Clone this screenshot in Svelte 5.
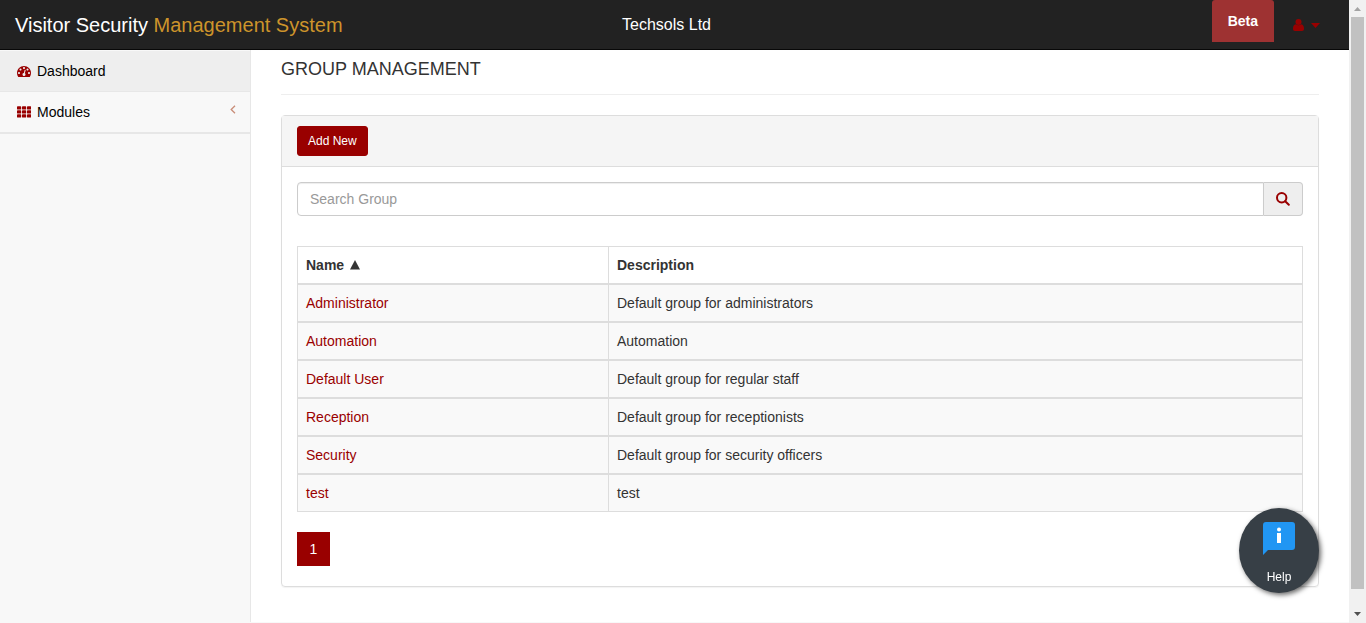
<script>
  const groups = [
    { name: 'Administrator', description: 'Default group for administrators' },
    { name: 'Automation', description: 'Automation' },
    { name: 'Default User', description: 'Default group for regular staff' },
    { name: 'Reception', description: 'Default group for receptionists' },
    { name: 'Security', description: 'Default group for security officers' },
    { name: 'test', description: 'test' }
  ];

  let query = $state('');
  let ascending = $state(true);

  const visible = $derived(
    groups
      .filter((g) => g.name.toLowerCase().includes(query.trim().toLowerCase()))
      .sort((a, b) => a.name.localeCompare(b.name) * (ascending ? 1 : -1))
  );
</script>

<div class="shell">
  <div class="page">
    <header class="navbar">
      <a class="brand" href="#home">Visitor Security <span>Management System</span></a>
      <div class="company">Techsols Ltd</div>
      <div class="tools">
        <span class="beta">Beta</span>
        <button class="user" type="button" aria-label="User menu">
          <svg width="11" height="12" viewBox="0 0 11 12" aria-hidden="true">
            <circle cx="5.500" cy="3" r="3" />
            <path d="M2.800 5.200C.8 5.300 0 7.300 0 9.800C0 11.200 .8 12 2 12H9C10.200 12 11 11.200 11 9.800C11 7.300 10.200 5.300 8.200 5.200C6.800 6.600 4.200 6.600 2.800 5.200Z" />
          </svg>
          <svg width="9" height="5" viewBox="0 0 9 5" aria-hidden="true"><path d="M0 0H9L4.500 5Z" /></svg>
        </button>
      </div>
    </header>

    <div class="body">
      <nav class="sidebar">
        <ul>
          <li>
            <a class="active" href="#dashboard">
              <svg width="14" height="14" viewBox="0 0 1792 1792" aria-hidden="true">
                <path d="M384 1152q0-53-37.5-90.5t-90.5-37.5-90.5 37.5-37.5 90.5 37.5 90.5 90.5 37.5 90.5-37.5 37.5-90.5zm192-448q0-53-37.5-90.5t-90.5-37.5-90.5 37.5-37.5 90.5 37.5 90.5 90.5 37.5 90.5-37.5 37.5-90.5zm428 481l101-382q6-26-7.500-48.500t-38.500-29.500-48 6.500-30 39.500l-101 382q-60 5-107 43.500t-63 98.500q-20 77 20 146t117 89 146-20 89-117q16-60-6-117t-72-91zm660-33q0-53-37.500-90.500t-90.500-37.500-90.500 37.500-37.500 90.500 37.500 90.500 90.500 37.500 90.500-37.500 37.500-90.500zm-640-640q0-53-37.500-90.500t-90.500-37.500-90.500 37.500-37.500 90.500 37.500 90.500 90.500 37.500 90.500-37.500 37.500-90.500zm448 192q0-53-37.500-90.500t-90.500-37.500-90.500 37.500-37.500 90.500 37.500 90.500 90.500 37.500 90.500-37.500 37.500-90.500zm320 448q0 261-141 483-19 29-54 29h-1402q-35 0-54-29-141-221-141-483 0-182 71-348t191-286 286-191 348-71 348 71 286 191 191 286 71 348z" />
              </svg>
              Dashboard
            </a>
          </li>
          <li>
            <a href="#modules">
              <svg width="14" height="12" viewBox="0 0 14 12" aria-hidden="true">
                {#each [0.3, 4.3, 8.3] as y}
                  {#each [0, 5, 10] as x}
                    <rect {x} {y} width="4.200" height="3.300" rx="0.700" />
                  {/each}
                {/each}
              </svg>
              Modules
              <svg class="chevron" width="6" height="9" viewBox="0 0 6 9" aria-hidden="true">
                <path d="M5 0.700L1.200 4.500L5 8.300" />
              </svg>
            </a>
          </li>
        </ul>
      </nav>

      <main>
        <h1>GROUP MANAGEMENT</h1>
        <section class="panel">
          <div class="panel-heading">
            <button class="add" type="button">Add New</button>
          </div>
          <div class="panel-body">
            <form class="search" onsubmit={(e) => e.preventDefault()}>
              <input type="text" placeholder="Search Group" aria-label="Search Group" bind:value={query} />
              <button type="submit" aria-label="Search">
                <svg width="14" height="14" viewBox="0 0 14 14" aria-hidden="true">
                  <circle cx="5.700" cy="5.700" r="4.700" />
                  <path d="M9.200 9.200L12.800 12.800" />
                </svg>
              </button>
            </form>

            <table>
              <colgroup>
                <col class="name-col" />
                <col />
              </colgroup>
              <thead>
                <tr>
                  <th scope="col" aria-sort={ascending ? 'ascending' : 'descending'}>
                    <button type="button" onclick={() => (ascending = !ascending)}>
                      Name
                      <svg class:flipped={!ascending} width="10" height="10" viewBox="0 0 10 10" aria-hidden="true"><path d="M5 0L10 9.500H0Z" /></svg>
                    </button>
                  </th>
                  <th scope="col">Description</th>
                </tr>
              </thead>
              <tbody>
                {#each visible as group (group.name)}
                  <tr>
                    <td><a href="#group">{group.name}</a></td>
                    <td>{group.description}</td>
                  </tr>
                {/each}
              </tbody>
            </table>

            <a class="page-link" href="#page" aria-current="page">1</a>
          </div>
        </section>
      </main>
    </div>
  </div>

  <div class="scrollbar" aria-hidden="true">
    <svg width="17" height="17" viewBox="0 0 17 17"><path d="M5 11L8.500 7L12 11Z" fill="#a3a3a3" /></svg>
    <div class="thumb"></div>
    <svg width="17" height="17" viewBox="0 0 17 17"><path d="M5 6L8.500 10L12 6Z" fill="#505050" /></svg>
  </div>
</div>

<button class="help" type="button">
  <svg width="32" height="33" viewBox="0 0 32 33" aria-hidden="true">
    <path d="M3 0H29Q32 0 32 3V25Q32 28 29 28H5L0 33V3Q0 0 3 0Z" fill="#2196f3" />
    <circle cx="16" cy="7.500" r="2" fill="#fff" />
    <rect x="14" y="11" width="4" height="10" fill="#fff" />
  </svg>
  <span>Help</span>
</button>

<style>
  :global(body) {
    background: #f8f8f8;
    color: #333;
    font: 14px/20px "Liberation Sans", Arial, Helvetica, sans-serif;
  }

  * {
    box-sizing: border-box;
  }

  a {
    color: #900;
    text-decoration: none;
  }

  button,
  input {
    font: inherit;
    margin: 0;
  }

  button {
    cursor: pointer;
  }

  .shell {
    display: grid;
    grid-template-columns: 1fr 17px;
    min-height: 100vh;
  }

  .page {
    display: flex;
    flex-direction: column;
  }

  .navbar {
    display: grid;
    grid-template-columns: 1fr auto 1fr;
    height: 50px;
    background: #222;
    border-bottom: 1px solid #080808;
  }

  .brand {
    padding: 15px;
    color: #fff;
    font-size: 20px;
  }

  .brand span {
    color: #cd942b;
  }

  .company {
    padding-top: 15px;
    margin-right: 16px;
    color: #fff;
    font-size: 16px;
  }

  .tools {
    display: flex;
    justify-content: flex-end;
    align-items: flex-start;
    padding-right: 14px;
  }

  .beta {
    height: 42px;
    padding: 11px 16px;
    border-radius: 3px 3px 0 0;
    background: #9e3232;
    color: #fff;
    font-weight: bold;
  }

  .user {
    display: flex;
    align-items: center;
    gap: 7px;
    height: 50px;
    padding: 0 15px 0 19px;
    border: 0;
    background: none;
    fill: #900;
  }

  .body {
    display: flex;
    flex: 1;
    padding-bottom: 1px;
  }

  .sidebar {
    width: 251px;
    flex: none;
    border-right: 1px solid #e7e7e7;
  }

  ul {
    margin: 1px 0 0;
    padding: 0;
    list-style: none;
    border-bottom: 1px solid #e7e7e7;
  }

  li {
    border-bottom: 1px solid #e7e7e7;
  }

  li a {
    display: flex;
    align-items: center;
    gap: 6px;
    padding: 10px 14px 10px 17px;
    color: #000;
  }

  li a.active {
    background: #eee;
  }

  li svg {
    fill: #900;
  }

  li .chevron {
    margin: 0 0 5px auto;
    fill: none;
    stroke: #c98d78;
    stroke-width: 1.3;
  }

  main {
    flex: 1;
    min-width: 0;
    padding: 0 30px 35px;
    background: #fff;
  }

  h1 {
    margin: 0 0 20px;
    padding: 9px 0 15px;
    border-bottom: 1px solid #eee;
    font-size: 18px;
    font-weight: normal;
    line-height: 20px;
  }

  .panel {
    border: 1px solid #ddd;
    border-radius: 4px;
    box-shadow: 0 1px 1px rgba(0, 0, 0, 0.05);
  }

  .panel-heading {
    padding: 10px 15px;
    border-bottom: 1px solid #ddd;
    background: #f5f5f5;
  }

  .add {
    display: block;
    padding: 5px 10px;
    border: 1px solid #900;
    border-radius: 3px;
    background: #900;
    color: #fff;
    font-size: 12px;
    line-height: 18px;
  }

  .panel-body {
    padding: 15px 15px 20px;
  }

  .search {
    display: flex;
    height: 34px;
    margin-bottom: 30px;
  }

  .search input {
    flex: 1;
    min-width: 0;
    padding: 6px 12px;
    border: 1px solid #ccc;
    border-radius: 4px 0 0 4px;
    background: #fff;
    box-shadow: inset 0 1px 1px rgba(0, 0, 0, 0.075);
    color: #555;
  }

  .search input::placeholder {
    color: #999;
  }

  .search button {
    display: flex;
    align-items: center;
    justify-content: center;
    width: 39px;
    padding: 0;
    border: 1px solid #ccc;
    border-left: 0;
    border-radius: 0 4px 4px 0;
    background: #eee;
    fill: none;
    stroke: #900;
    stroke-width: 2;
    stroke-linecap: round;
  }

  table {
    width: 100%;
    margin-bottom: 20px;
    border: 1px solid #ddd;
    border-spacing: 0;
    table-layout: fixed;
  }

  .name-col {
    width: 310px;
  }

  th,
  td {
    padding: 8px;
    border-bottom: 2px solid #ddd;
    text-align: left;
  }

  th + th,
  td + td {
    border-left: 1px solid #ddd;
  }

  tbody tr {
    background: #f9f9f9;
  }

  tbody tr:last-child td {
    border-bottom: 0;
  }

  th button {
    display: flex;
    align-items: center;
    gap: 6px;
    padding: 0;
    border: 0;
    background: none;
    color: inherit;
    fill: #333;
  }

  .flipped {
    transform: rotate(180deg);
  }

  .page-link {
    display: block;
    width: 33px;
    padding: 7px 0;
    background: #900;
    color: #fff;
    text-align: center;
  }

  .scrollbar {
    position: sticky;
    top: 0;
    display: flex;
    flex-direction: column;
    height: 100vh;
    background: #f1f1f1;
  }

  .scrollbar svg {
    display: block;
    flex: none;
  }

  .thumb {
    flex: 1;
    margin: 0 2px 17px;
    background: #c1c1c1;
  }

  .help {
    position: fixed;
    right: 47px;
    bottom: 30px;
    display: flex;
    flex-direction: column;
    align-items: center;
    gap: 12px;
    width: 80px;
    height: 85px;
    padding: 14px 0 0;
    border: 0;
    border-radius: 50%;
    background: #373f46;
    box-shadow: 2px 2px 5px rgba(0, 0, 0, 0.6);
    color: #fff;
    font-size: 12px;
    line-height: 20px;
  }
</style>
